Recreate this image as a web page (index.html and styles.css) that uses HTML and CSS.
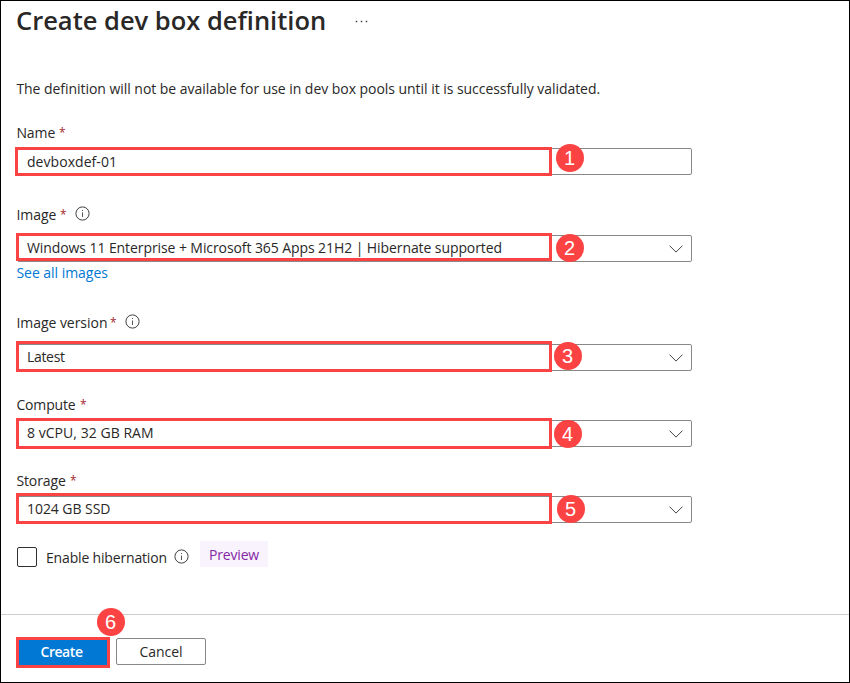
FILE: index.html
```
<!DOCTYPE html>
<html lang="en">
<head>
<meta charset="utf-8">
<title>Create dev box definition</title>
<link rel="stylesheet" href="styles.css">
</head>
<body>
<svg width="0" height="0" class="defs">
  <symbol id="info" viewBox="0 0 15 15"><circle cx="7.5" cy="7.5" r="6.6" fill="none" stroke="#404040" stroke-width="1"/><path d="M7.5 6.5V11" stroke="#555" stroke-width="1"/><path d="M7 4h1v1.1H7z" fill="#555"/></symbol>
  <symbol id="chevron" viewBox="0 0 14 8"><path d="M.5.6 7 7.1 13.5.6" fill="none" stroke="#444" stroke-width="1"/></symbol>
</svg>
<main class="page">
  <header class="header">
    <h1 class="title">Create dev box definition</h1>
    <div class="more"><i></i><i></i><i></i></div>
  </header>
  <p class="description">The definition will not be available for use in dev box pools until it is successfully validated.</p>
  <form class="form">
    <div class="group name">
      <div class="label"><span class="label-text">Name</span><span class="required">*</span></div>
      <div class="field"><span class="value">devboxdef-01</span><div class="highlight"></div><span class="badge">1</span></div>
    </div>
    <div class="group image">
      <div class="label"><span class="label-text">Image</span><span class="required">*</span><svg class="info"><use href="#info"/></svg></div>
      <div class="field select"><span class="value">Windows 11 Enterprise + Microsoft 365 Apps 21H2 | Hibernate supported</span><svg class="chevron"><use href="#chevron"/></svg><div class="highlight"></div><span class="badge">2</span></div>
      <a class="link">See all images</a>
    </div>
    <div class="group version">
      <div class="label"><span class="label-text">Image version</span><span class="required">*</span><svg class="info"><use href="#info"/></svg></div>
      <div class="field select"><span class="value">Latest</span><svg class="chevron"><use href="#chevron"/></svg><div class="highlight"></div><span class="badge">3</span></div>
    </div>
    <div class="group compute">
      <div class="label"><span class="label-text">Compute</span><span class="required">*</span></div>
      <div class="field select"><span class="value">8 vCPU, 32 GB RAM</span><svg class="chevron"><use href="#chevron"/></svg><div class="highlight"></div><span class="badge">4</span></div>
    </div>
    <div class="group storage">
      <div class="label"><span class="label-text">Storage</span><span class="required">*</span></div>
      <div class="field select"><span class="value">1024 GB SSD</span><svg class="chevron"><use href="#chevron"/></svg><div class="highlight"></div><span class="badge">5</span></div>
    </div>
    <div class="hibernate">
      <span class="checkbox"></span>
      <span class="hibernate-text">Enable hibernation</span>
      <svg class="info"><use href="#info"/></svg>
      <span class="preview">Preview</span>
    </div>
  </form>
  <footer class="footer">
    <div class="button primary"><span class="primary-text">Create</span><span class="badge">6</span></div>
    <div class="button cancel">Cancel</div>
  </footer>
</main>
</body>
</html>
```
FILE: styles.css
```
* { box-sizing: border-box; }
body { margin: 0; background: #fff; }
.defs { position: absolute; }
.page {
  display: flex;
  flex-direction: column;
  width: 850px;
  height: 683px;
  border: 1px solid #000;
  overflow: hidden;
  font: 14px/20px "Open Sans", "Noto Sans", sans-serif;
  color: #292827;
}
.header { display: flex; height: 78px; padding-left: 15px; }
.title { margin: 1px 0 0; font-size: 25.5px; font-weight: 600; line-height: 36px; white-space: nowrap; width: 340px; }
.more { display: flex; gap: 4px; margin-top: 20px; }
.more i { width: 1px; height: 1px; background: #333; box-shadow: 0 0 0 .3px #777; }
.description { margin: 0 0 24px 15.4px; letter-spacing: -.043px; white-space: nowrap; }
.form { display: flex; flex-direction: column; height: 491px; padding-left: 16px; }
.label { display: flex; height: 20px; margin-left: -.6px; }
.label-text { white-space: nowrap; }
.required { width: 6px; margin-left: 2.6px; color: #a4262c; font-size: 12px; }
.info { flex: none; width: 15px; height: 15px; margin: 1px 0 0 9px; }
.field {
  position: relative;
  display: flex;
  justify-content: space-between;
  width: 675px;
  height: 27px;
  padding: 3px 8px 0 9px;
  border: 1px solid #8a8886;
  border-radius: 2px;
}
.select { padding-top: 2px; }
.chevron { width: 14px; height: 8px; margin-top: 7px; }
.highlight { position: absolute; left: -2px; width: 536px; border: 3px solid #fc4343; }
.badge {
  position: absolute;
  width: 28px;
  height: 28px;
  border-radius: 50%;
  background: #fc4343;
  color: #fff;
  font: 20px/28px "Liberation Sans", sans-serif;
  letter-spacing: 0;
  text-align: center;
}
.name { height: 82px; }
.name .label { margin-bottom: 5px; }
.name .label-text { width: 40px; letter-spacing: -.09px; }
.name .value { letter-spacing: .05px; }
.name .highlight { left: -3px; top: -2px; width: 537px; height: 29px; }
.name .badge { left: 537.5px; top: -5.5px; }
.image { height: 108px; }
.image .label { margin-bottom: 10px; }
.image .label-text { width: 41px; letter-spacing: -.06px; }
.image .value { letter-spacing: -.085px; }
.image .highlight { top: -3px; height: 28px; }
.image .badge { left: 537.5px; top: -2.5px; }
.link { display: block; margin: 1px 0 0 -.6px; color: #0078d4; letter-spacing: -.03px; }
.version { height: 82px; }
.version .label { margin-bottom: 11px; }
.version .label-text { width: 91px; letter-spacing: -.04px; }
.version .value { letter-spacing: -.32px; }
.version .highlight { top: -4px; height: 31px; }
.version .badge { left: 535.5px; top: -3.5px; }
.compute { height: 76px; }
.compute .label { margin-bottom: 5px; }
.compute .label-text { width: 61px; letter-spacing: -.15px; }
.compute .value { letter-spacing: .04px; }
.compute .highlight { top: -3px; height: 31px; }
.compute .badge { left: 535.5px; top: -1.5px; }
.storage { height: 70px; }
.storage .label { margin-bottom: 5px; }
.storage .label-text { width: 51px; letter-spacing: -.12px; }
.storage .value { letter-spacing: -.06px; }
.storage .highlight { top: -4px; height: 31px; }
.storage .badge { left: 538.5px; top: -2.5px; }
.hibernate { display: flex; }
.checkbox { width: 20px; height: 20px; margin-top: 6px; border: 1px solid #323130; border-radius: 2px; }
.hibernate-text { width: 120px; margin: 7px 0 0 9px; letter-spacing: -.17px; white-space: nowrap; }
.hibernate .info { margin: 7.5px 0 0 8.4px; }
.preview { width: 68px; height: 26px; margin-left: 10.6px; padding-top: 4px; background: #f8f3fc; color: #8427a3; text-align: center; letter-spacing: -.149px; }
.footer { display: flex; align-items: flex-start; gap: 6px; flex: 1; padding: 22px 0 0 15px; border-top: 1px solid #cecece; }
.button { position: relative; text-align: center; }
.primary { width: 94px; height: 31px; padding-right: 3px; border: 3px solid #fc4343; background: #0078d4; color: #fff; font-weight: 600; letter-spacing: -.45px; line-height: 24px; }
.primary .badge { left: 77.5px; top: -32px; }
.cancel { width: 90px; height: 27px; margin-top: 1px; border: 1px solid #8a8886; border-radius: 2px; letter-spacing: -.05px; line-height: 26px; }
```
